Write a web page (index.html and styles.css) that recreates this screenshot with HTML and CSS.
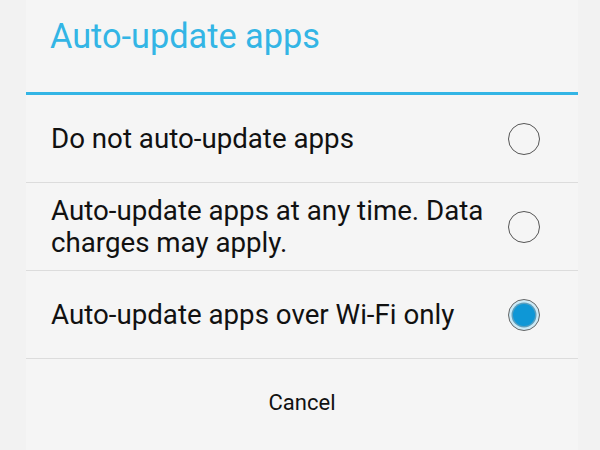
FILE: index.html
```html
<!DOCTYPE html>
<html>
<head>
<meta charset="utf-8">
<link rel="stylesheet" href="styles.css">
</head>
<body>
<div class="dialog">
  <div class="title">Auto-update apps</div>
  <div class="title-bar"></div>
  <div class="row">
    <div class="label">Do not auto-update apps</div>
    <span class="radio"></span>
  </div>
  <div class="row">
    <div class="label">Auto-update apps at any time. Data charges may apply.</div>
    <span class="radio"></span>
  </div>
  <div class="row">
    <div class="label">Auto-update apps over Wi-Fi only</div>
    <span class="radio checked"><span class="dot"></span></span>
  </div>
  <div class="actions">
    <div class="cancel">Cancel</div>
  </div>
</div>
</body>
</html>
```
FILE: styles.css
```css
html, body {
  margin: 0;
  padding: 0;
  background: #f2f2f2;
  font-family: Roboto, "Noto Sans", sans-serif;
}
.dialog {
  margin: 0 22px 0 26px;
  width: 552px;
  height: 450px;
  background: #f5f5f5;
  display: flex;
  flex-direction: column;
}
.title {
  height: 92px;
  box-sizing: border-box;
  padding: 14px 0 0 24px;
  font-size: 34.3px;
  line-height: 44px;
  color: #33b5e5;
}
.title-bar {
  height: 3px;
  background: #33b5e5;
}
.row {
  height: 87px;
  border-bottom: 1px solid #dcdcdc;
  display: flex;
  align-items: center;
  padding: 0 38px 0 25px;
  gap: 14px;
}
.label {
  flex: 1;
  font-size: 27.7px;
  line-height: 32px;
  color: #111;
}
.radio {
  width: 30px;
  height: 30px;
  border: 1.5px solid #555;
  border-radius: 50%;
  flex: none;
  display: flex;
  align-items: center;
  justify-content: center;
}
.radio.checked {
  background: #cce9f5;
  border-color: #666;
}
.dot {
  width: 22px;
  height: 22px;
  border-radius: 50%;
  background: #0e97d6;
  box-shadow: 0 0 0 1.5px #5a9fbe;
}
.actions {
  flex: 1;
  display: flex;
  justify-content: center;
  padding-top: 29px;
}
.cancel {
  font-size: 22px;
  line-height: 30px;
  color: #111;
}
```
